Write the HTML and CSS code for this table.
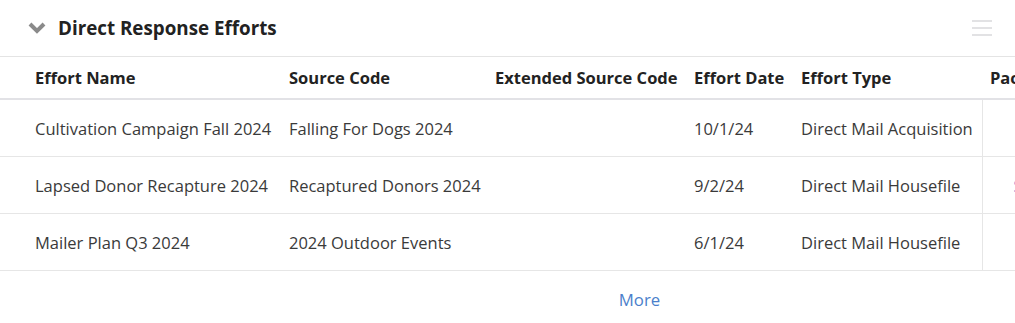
FILE: index.html
```html
<!DOCTYPE html>
<html lang="en">
<head>
  <meta charset="UTF-8" />
  <title>Direct Response Efforts</title>
  <link rel="stylesheet" href="styles.css">
</head>
<body>

  <div class="card">
    <div class="card-head">
      <div class="card-title">
        <svg class="chevron" width="18" height="12" viewBox="0 0 18 12">
          <path d="M2 2 L9 9 L16 2" fill="none" stroke="#8a8a8a" stroke-width="4" />
        </svg>
        <h2>Direct Response Efforts</h2>
      </div>
      <div class="menu-icon">
        <span></span><span></span><span></span>
      </div>
    </div>

    <div class="table-wrap">
      <table class="grid">
        <colgroup>
          <col style="width:281px">
          <col style="width:206px">
          <col style="width:199px">
          <col style="width:107px">
          <col style="width:189px">
          <col style="width:140px">
        </colgroup>
        <thead>
          <tr>
            <th>Effort Name</th>
            <th>Source Code</th>
            <th>Extended Source Code</th>
            <th>Effort Date</th>
            <th>Effort Type</th>
            <th>Package</th>
          </tr>
        </thead>
        <tbody>
          <tr>
            <td>Cultivation Campaign Fall 2024</td>
            <td>Falling For Dogs 2024</td>
            <td></td>
            <td>10/1/24</td>
            <td>Direct Mail Acquisition</td>
            <td class="frozen"></td>
          </tr>
          <tr>
            <td>Lapsed Donor Recapture 2024</td>
            <td>Recaptured Donors 2024</td>
            <td></td>
            <td>9/2/24</td>
            <td>Direct Mail Housefile</td>
            <td class="frozen"><a href="#">Standard</a></td>
          </tr>
          <tr>
            <td>Mailer Plan Q3 2024</td>
            <td>2024 Outdoor Events</td>
            <td></td>
            <td>6/1/24</td>
            <td>Direct Mail Housefile</td>
            <td class="frozen"></td>
          </tr>
        </tbody>
      </table>
    </div>

    <div class="more">
      <a href="#">More</a>
    </div>
  </div>

</body>
</html>
```

FILE: styles.css
```css
body {
  margin: 0;
  background: #fff;
  font-family: "Open Sans", "Noto Sans", Arial, sans-serif;
  color: #333;
}
.card {
  width: 1015px;
  overflow: hidden;
}
.card-head {
  height: 56px;
  display: flex;
  align-items: center;
  justify-content: space-between;
  border-bottom: 1px solid #e4e4e4;
}
.card-title {
  display: flex;
  align-items: center;
  padding-left: 28px;
}
.chevron {
  margin-right: 12px;
}
.card-title h2 {
  margin: 0;
  font-size: 18.8px;
  font-weight: 700;
  color: #222;
}
.menu-icon {
  width: 20px;
  margin-right: 23px;
  display: flex;
  flex-direction: column;
  gap: 5px;
}
.menu-icon span {
  display: block;
  height: 2px;
  background: #e2e2e4;
}
.table-wrap {
  overflow: hidden;
}
.grid {
  table-layout: fixed;
  border-collapse: collapse;
  width: 1122px;
}
.grid th,
.grid td {
  padding: 0 8px;
  text-align: left;
  white-space: nowrap;
  overflow: hidden;
  font-size: 16.5px;
}
.grid th:first-child,
.grid td:first-child {
  padding-left: 35px;
}
.grid th {
  height: 41px;
  font-weight: 700;
  color: #222;
  border-bottom: 2px solid #e2e2e6;
}
.grid td {
  height: 56px;
  color: #3a3a3a;
  border-bottom: 1px solid #e6e6e6;
}
.grid td.frozen {
  padding-left: 31px;
  border-left: 1px solid #e6e6e6;
}
.grid td a {
  color: #6a5acd;
  text-decoration: none;
}
.more {
  text-align: center;
  padding-top: 17px;
}
.more a {
  font-size: 16.8px;
  color: #4b7fcb;
  text-decoration: none;
  margin-left: 264px;
}
```
